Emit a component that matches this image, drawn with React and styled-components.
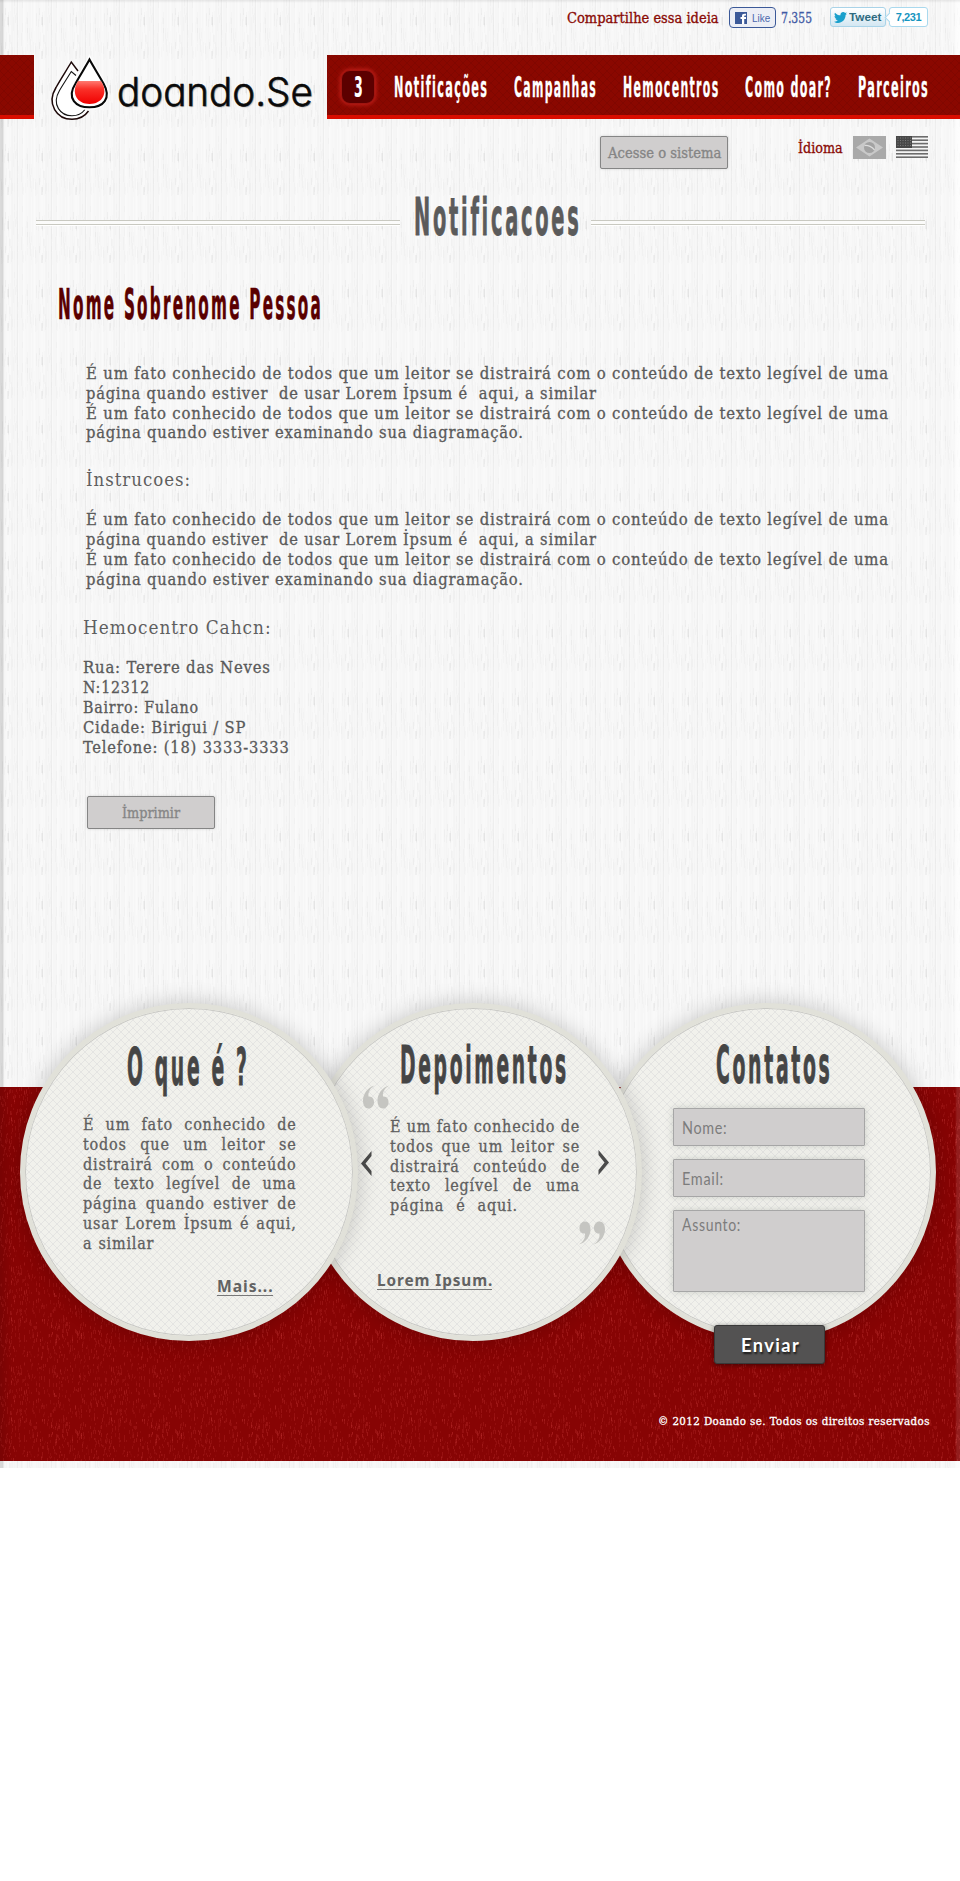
import React, { useLayoutEffect, useRef } from "react";
import styled, { createGlobalStyle } from "styled-components";

const svgUrl = (w, h, body) =>
  `url("data:image/svg+xml,${encodeURIComponent(
    `<svg xmlns="http://www.w3.org/2000/svg" width="${w}" height="${h}">${body}</svg>`
  )}")`;

// Small seeded generator so that the textures are the same on every load.
const seeded = (seed) => () => {
  seed = (seed * 16807) % 2147483647;
  return seed / 2147483647;
};

const paperTile = (() => {
  const rnd = seeded(71);
  let s = "";
  for (let x = 0; x < 34; x += 1) {
    s += `<rect x="${x}" width="1" height="68" fill="#000" opacity="${(rnd() * 0.022).toFixed(3)}"/>`;
  }
  for (let i = 0; i < 60; i++) {
    const o = (0.005 + rnd() * 0.015).toFixed(3);
    s += `<rect x="${Math.floor(rnd() * 34)}" y="${Math.floor(rnd() * 52)}" width="1" height="${6 + Math.floor(rnd() * 10)}" fill="#000" opacity="${o}"/>`;
  }
  [17, 51].forEach((y) => {
    s += `<rect x="7" y="${y}" width="2" height="8" fill="#000" opacity=".04"/>`;
    s += `<rect x="5" y="${y - 9}" width="1" height="7" fill="#000" opacity=".03"/>`;
  });
  s += `<rect x="17" width="1" height="68" fill="#000" opacity=".035"/>`;
  return svgUrl(34, 68, s);
})();

const leatherTile = (() => {
  const rnd = seeded(913);
  let s = "";
  for (let i = 0; i < 700; i++) {
    const x = Math.floor(rnd() * 100);
    const y = Math.floor(rnd() * 98);
    const o = (0.04 + rnd() * 0.12).toFixed(3);
    s += `<rect x="${x}" y="${y}" width="1" height="${2 + Math.floor(rnd() * 3)}" fill="#f66" opacity="${o}"/>`;
  }
  return svgUrl(100, 100, s);
})();

const hatchTile = (color, opacity) =>
  svgUrl(8, 8, `<path d="M0 0L8 8M8 0L0 8" stroke="${color}" stroke-opacity="${opacity}" stroke-width=".7"/>`);

const GlobalStyle = createGlobalStyle`
  * { box-sizing: border-box; }
  body { margin: 0; background: #fff; }
`;

const serif = `"DejaVu Serif Condensed", "DejaVu Serif", serif`;
const tall = `"DejaVu Sans Condensed", "DejaVu Sans", sans-serif`;

const FitBox = styled.span`
  display: block;
  flex: none;
  width: ${(p) => p.$w}px;
  white-space: pre;
`;
const FitInner = styled.span`
  display: inline-block;
  transform-origin: 0 50%;
`;

// Squeezes or stretches one line of text to the given width.
function Fit({ w, children }) {
  const ref = useRef(null);
  useLayoutEffect(() => {
    const el = ref.current;
    const spacing = parseFloat(getComputedStyle(el).letterSpacing) || 0;
    el.style.transform = `scaleX(${w / (el.offsetWidth - spacing)})`;
  }, [w, children]);
  return (
    <FitBox $w={w}>
      <FitInner ref={ref}>{children}</FitInner>
    </FitBox>
  );
}

const Page = styled.div`
  width: 960px;
  height: 1468px;
  overflow: hidden;
  background:
    linear-gradient(rgba(0, 0, 0, 0.08), transparent 3px),
    linear-gradient(90deg, rgba(0, 0, 0, 0.13) 3px, transparent 4px, transparent 954px, rgba(255, 255, 255, 0.7) 956px),
    ${paperTile} #fafafa;
`;

const ShareBar = styled.div`
  height: 55px;
  padding: 7px 31px 0 567px;
  display: flex;
  align-items: flex-start;
`;
const ShareLabel = styled.div`
  font: 14.5px/20px ${serif};
  color: #8a0a05;
  -webkit-text-stroke: 0.3px #8a0a05;
  padding-top: 1px;
  margin-right: 10px;
`;
const LikeButton = styled.div`
  width: 47px;
  height: 21px;
  border: 1px solid #3b5998;
  border-radius: 4px;
  background: #eceef5;
  display: flex;
  align-items: center;
  gap: 5px;
  padding-left: 5px;
  font: 11px "Liberation Sans", sans-serif;
  color: #4a66ac;
`;
const LikeCount = styled.div`
  font: 14px/23px ${serif};
  color: #3f59a5;
  -webkit-text-stroke: 0.3px #3f59a5;
  margin: 0 18px 0 5px;
`;
const TweetButton = styled.div`
  width: 56px;
  height: 20px;
  border: 1px solid #a9d3e8;
  border-radius: 3px;
  background: linear-gradient(#fff, #d3e7f2);
  display: flex;
  align-items: center;
  gap: 2px;
  padding-left: 3px;
  font: bold 11px "Liberation Sans", sans-serif;
  color: #2d6a80;
`;
const TweetCount = styled.div`
  position: relative;
  width: 39px;
  height: 20px;
  margin-left: 3px;
  border: 1px solid #a9d9ee;
  border-radius: 3px;
  background: #fff;
  font: bold 11px/18px "Liberation Sans", sans-serif;
  letter-spacing: -0.4px;
  text-align: center;
  color: #1595bf;
  &::before {
    content: "";
    position: absolute;
    left: -4px;
    top: 6px;
    width: 6px;
    height: 6px;
    background: #fff;
    border: solid #a9d9ee;
    border-width: 0 0 1px 1px;
    transform: rotate(45deg);
  }
`;

const Header = styled.header`
  display: flex;
  height: 64px;
`;
const RedStripe = styled.div`
  width: 34px;
  background: ${hatchTile("#500", 0.25)} #8a0800;
  border-bottom: 4px solid #d90d00;
`;
const LogoArea = styled.div`
  width: 293px;
  display: flex;
  padding-left: 15px;
  svg { overflow: visible; flex: none; }
`;
const Wordmark = styled.div`
  margin-left: 9px;
  font: 300 39px/60px Inter, sans-serif;
  font-feature-settings: "cv11" 1;
  padding-top: 7px;
  color: #0a0a0a;
  -webkit-text-stroke: 0.6px #0a0a0a;
  text-shadow: 1px 1px 1px rgba(0, 0, 0, 0.3);
`;
const Nav = styled.nav`
  flex: 1;
  display: flex;
  padding-left: 14px;
  background: ${hatchTile("#500", 0.25)} #8a0800;
  border-bottom: 4px solid #d90d00;
`;
const Badge = styled.div`
  width: 34px;
  height: 34px;
  margin: 15px 19px 0 0;
  border-radius: 9px;
  background: #5c0000;
  border: 1px solid #a01510;
  box-shadow: 0 0 4px 1px #c4201a;
  display: flex;
  justify-content: center;
  font: bold 28px/34px ${tall};
  color: #fff;
`;
const NavItem = styled.a`
  margin-right: ${(p) => p.$gap}px;
  padding-top: 3px;
  font: bold 28px/60px ${tall};
  letter-spacing: 3px;
  color: #fff;
  -webkit-text-stroke: 0.3px #fff;
`;

const Tools = styled.div`
  display: flex;
  padding: 17px 0 0 600px;
  height: 50px;
`;
const GreyButton = styled.div`
  width: 128px;
  height: 33px;
  border: 1px solid #858585;
  border-radius: 2px;
  background: #d0cece;
  box-shadow: 0 0 3px rgba(0, 0, 0, 0.15);
  display: flex;
  justify-content: center;
  font: 14.5px/32px ${serif};
  color: #858585;
  -webkit-text-stroke: 0.3px #858585;
`;
const Language = styled.div`
  margin: 2px 10px 0 70px;
  font: 14.5px/20px ${serif};
  color: #8a0a05;
  -webkit-text-stroke: 0.3px #8a0a05;
`;
const FlagSlot = styled.div`
  margin-right: 10px;
  height: 23px;
  svg { display: block; }
`;

const TitleRow = styled.div`
  display: flex;
  margin: 19px 35px 0 36px;
  height: 60px;
`;
const Rule = styled.div`
  width: ${(p) => p.$w}px;
  height: 5px;
  margin-top: 32px;
  border: 1px solid #c9c9c1;
  border-width: 1px 0;
  background: #fbfbfa;
  box-shadow: 0 1px 0 #fff;
`;
const Title = styled.h1`
  margin: 0 12px 0 14px;
  font: bold 51px/60px ${tall};
  letter-spacing: 6.5px;
  color: #5b5b5b;
  -webkit-text-stroke: 0.8px #5b5b5b;
`;
const PersonName = styled.h2`
  margin: 32px 0 0 58px;
  font: bold 42px/50px ${tall};
  letter-spacing: 5.5px;
  color: #5a0000;
  -webkit-text-stroke: 0.6px #5a0000;
`;
const Copy = styled.div`
  margin: ${(p) => p.$top}px 0 0 ${(p) => p.$left}px;
  font: 16.3px/${(p) => p.$lh || 19.75}px ${serif};
  letter-spacing: 0.8px;
  color: #5a5a5a;
  -webkit-text-stroke: 0.3px #5a5a5a;
`;
const Subtitle = styled.h3`
  margin: ${(p) => p.$top}px 0 0 ${(p) => p.$left}px;
  font: 400 19px/24px ${serif};
  letter-spacing: 1px;
  color: #5f5f5f;
`;
const PrintRow = styled.div`
  margin: 38px 0 258px 87px;
`;

const Footer = styled.footer`
  height: 374px;
  background:
    linear-gradient(90deg, rgba(0, 0, 0, 0.1), transparent 12px, transparent 955px, rgba(255, 255, 255, 0.1) 957px),
    ${leatherTile} #870404;
`;
const CircleRow = styled.div`
  display: flex;
  padding-left: 20px;
  position: relative;
  top: -84px;
  height: 338px;
`;
const Circle = styled.section`
  position: relative;
  z-index: ${(p) => p.$z};
  flex: none;
  width: 338px;
  height: 338px;
  margin-left: ${(p) => p.$shift || 0}px;
  padding: ${(p) => p.$pad};
  border: 5px solid #e1e1d9;
  border-radius: 50%;
  background: ${hatchTile("#778", 0.15)} #f1f1ec;
  box-shadow: inset 0 0 0 1px #c9c9c5, 0 0 22px rgba(0, 0, 0, 0.2);
`;
const CircleTitle = styled.h2`
  margin: 0 0 0 ${(p) => p.$left}px;
  font: bold 51px/60px ${tall};
  letter-spacing: 6.5px;
  color: #454545;
  -webkit-text-stroke: 0.8px #454545;
`;
const Justified = styled.div`
  width: ${(p) => p.$w}px;
  margin: ${(p) => p.$margin};
  font: 16px/19.8px ${serif};
  letter-spacing: 0.8px;
  color: #5f5f5f;
  -webkit-text-stroke: 0.3px #5f5f5f;
`;
const JustLine = styled.div`
  display: flex;
  justify-content: ${(p) => (p.$last ? "flex-start" : "space-between")};
  gap: ${(p) => p.$last || 0}px;
`;
const TextLink = styled.a`
  display: block;
  width: max-content;
  margin: ${(p) => p.$margin};
  border-bottom: 1px solid #777;
  font: bold 16.5px/19px "Noto Sans", sans-serif;
  letter-spacing: 1px;
  color: #626262;
`;
const Overlay = styled.span`
  position: absolute;
  left: ${(p) => p.$x}px;
  top: ${(p) => p.$y}px;
  line-height: 0;
`;
const Fields = styled.div`
  display: flex;
  flex-direction: column;
  gap: 13px;
  margin: 12px 0 0 70px;
`;
const Field = styled.div`
  width: 192px;
  height: ${(p) => (p.$tall ? 82 : 38)}px;
  padding: ${(p) => (p.$tall ? 3 : 8)}px 0 0 8px;
  border: 1px solid #a6a6a6;
  border-radius: 1px;
  background: #d0cece;
  box-shadow: 0 0 7px rgba(90, 100, 90, 0.25);
  font: 17px/22px Lato, sans-serif;
  letter-spacing: 0.8px;
  color: #7c7c7c;
`;
const Submit = styled.div`
  width: 111px;
  height: 39px;
  margin: 33px 0 0 111px;
  border: 1px solid #393939;
  border-radius: 3px;
  background: #535252;
  box-shadow: 0 1px 5px rgba(0, 0, 0, 0.5);
  display: flex;
  justify-content: center;
  font: bold 19px/38px Lato, sans-serif;
  letter-spacing: 1.5px;
  color: #fff;
  text-shadow: 1px 2px 2px rgba(0, 0, 0, 0.7);
`;
const Copyright = styled.div`
  display: flex;
  justify-content: flex-end;
  padding-right: 31px;
  margin-top: -13px;
  font: 11px/20px ${serif};
  letter-spacing: 0.4px;
  color: #fff;
  -webkit-text-stroke: 0.3px #fff;
`;

const Drops = () => (
  <svg width="59" height="64" viewBox="0 0 59 64">
    <defs>
      <linearGradient id="blood" x1="0" y1="0" x2="0" y2="1">
        <stop offset="0" stopColor="#ff7a70" />
        <stop offset=".35" stopColor="#fa3028" />
        <stop offset="1" stopColor="#f00000" />
      </linearGradient>
    </defs>
    <path d="M29 16L22.3 7C18 14.500 12 23.500 7 32.500C-3 49 8 64.300 23 64.300C30 64.300 36 61 39.500 56" fill="#fff" stroke="#1d0909" strokeWidth="1.500" />
    <path d="M27 20.500L22.300 16.500C18 23.500 14 29.500 10.500 35.500C2 50 12 60.800 23 60.800C29 60.800 33 58.500 36 54.500" fill="none" stroke="#151515" strokeWidth="1.100" />
    <path d="M40.500 3.500C37 11 31 20 26.500 28C17 43 27 53 40.500 53C54 53 63 43 54.500 28C50 20 44 11 40.500 3.500Z" fill="#fff" stroke="#fff" strokeWidth="4" />
    <path d="M40.500 4.500C37 11 31 20.500 26.500 28.500C17 43.500 27 52.300 40.500 52.300C54 52.300 63 43.500 54.500 28.500C50 20.500 44 11 40.500 4.500Z" fill="#fff" stroke="#080808" strokeWidth="2.100" />
    <path d="M29 26H52C60 38 53 49 40.500 49C28 49 21.500 38 29 26Z" fill="url(#blood)" />
  </svg>
);

const FacebookMark = () => (
  <svg width="12" height="12" viewBox="0 0 12 12">
    <rect width="12" height="12" fill="#3b5998" />
    <path d="M7 12V7H5.500V5H7V4C7 2.200 8 1.500 11 1.800V3.600C9.500 3.500 9.200 3.600 9.200 5H11V7H9.200V12Z" fill="#fff" />
  </svg>
);

const Bird = () => (
  <svg width="13" height="11" viewBox="0 0 24 20">
    <path d="M24 3.500L21.500 5C21.500 14 15 20 7.500 20C4.500 20 2 19 0 17.700C3 18 5.500 17 7 15.600C5 15.500 3.200 14 2.700 12H5C2.500 11.500 1 9.500 1 7L3.200 7.500C1 6 .500 3.200 1.800 1C4.500 4 8 6 12 6C11.300 2.500 14 0 17 0C18.500 0 19.800.600 20.500 1.500L23.500.500L22 3Z" fill="#19a0cc" />
  </svg>
);

const BrazilFlag = () => (
  <svg width="33" height="23" viewBox="0 0 33 23">
    <rect width="33" height="23" fill="#a9a9a9" />
    <path d="M3 11.500L16.500 2.500L30 11.500L16.500 20.500Z" fill="#c9c9c9" />
    <circle cx="16.500" cy="11.500" r="5.500" fill="#a2a2a2" />
    <path d="M11.500 9.500C15 9 19.500 11 21.500 14" stroke="#ddd" strokeWidth="1.300" fill="none" />
  </svg>
);

const UsFlag = () => (
  <svg width="32" height="22" viewBox="0 0 32 22">
    <rect width="32" height="22" fill="#f4f4f4" />
    {[0, 3.4, 6.8, 10.2, 13.6, 17, 20.4].map((y) => (
      <rect key={y} y={y} width="32" height="1.600" fill="#6c6c6c" />
    ))}
    <rect width="16" height="12" fill="#484848" />
    {[2, 4.5, 7, 9.5].map((y) => (
      <path key={y} d={`M1.500 ${y}H15`} stroke="#7a7a7a" strokeWidth="1" strokeDasharray="1 1.500" />
    ))}
  </svg>
);

const QuoteMark = ({ flip }) => (
  <svg width="27" height="24" viewBox="0 0 27 24">
    <g fill="#c5c5c1" transform={flip ? "rotate(180 13.5 12)" : undefined}>
      {[0, 14.5].map((x) => (
        <path key={x} transform={`translate(${x} 0)`} d="M11.500.500C7 3.500 5 7 5.500 11.500C9 11 11.500 14 11 18C10.500 21.500 8 23.500 5.500 23.500C2 23.500 0 20 0 15.500C0 9 4.500 2.500 11.500.500Z" />
      ))}
    </g>
  </svg>
);

const Chevron = ({ right }) => (
  <svg width="11" height="25" viewBox="0 0 11 25">
    <path transform={right ? "rotate(180 5.5 12.5)" : undefined} d="M10.500 0V5L4.500 12.500L10.500 20V25L0 12.500Z" fill="#4b4b4b" />
  </svg>
);

const Lines = ({ rows }) => rows.map(([w, t], i) => <Fit key={i} w={w}>{t}</Fit>);

const JustifiedText = ({ rows, lastGap }) =>
  rows.map((t, i) => (
    <JustLine key={i} $last={i === rows.length - 1 ? lastGap : 0}>
      {t.split(" ").map((word, j) => (
        <span key={j}>{word}{" "}</span>
      ))}
    </JustLine>
  ));

const lorem = [
  [802, "É um fato conhecido de todos que um leitor se distrairá com o conteúdo de texto legível de uma"],
  [510, "página quando estiver  de usar Lorem İpsum é  aqui, a similar"],
  [802, "É um fato conhecido de todos que um leitor se distrairá com o conteúdo de texto legível de uma"],
  [437, "página quando estiver examinando sua diagramação."],
];

const navItems = [
  ["Notificações", 93, 27],
  ["Campanhas", 82, 27],
  ["Hemocentros", 95, 27],
  ["Como doar?", 86, 27],
  ["Parceiros", 70, 0],
];

export default function App() {
  return (
    <>
      <GlobalStyle />
      <Page>
        <ShareBar>
          <ShareLabel><Fit w={152}>Compartilhe essa ideia</Fit></ShareLabel>
          <LikeButton><FacebookMark /><Fit w={18}>Like</Fit></LikeButton>
          <LikeCount><Fit w={31}>7.355</Fit></LikeCount>
          <TweetButton><Bird /><Fit w={32}>Tweet</Fit></TweetButton>
          <TweetCount>7,231</TweetCount>
        </ShareBar>

        <Header>
          <RedStripe />
          <LogoArea>
            <Drops />
            <Wordmark><Fit w={196}>doando.Se</Fit></Wordmark>
          </LogoArea>
          <Nav>
            <Badge><Fit w={9}>3</Fit></Badge>
            {navItems.map(([label, w, gap]) => (
              <NavItem key={label} $gap={gap}><Fit w={w}>{label}</Fit></NavItem>
            ))}
          </Nav>
        </Header>

        <Tools>
          <GreyButton><Fit w={113}>Acesse o sistema</Fit></GreyButton>
          <Language><Fit w={45}>İdioma</Fit></Language>
          <FlagSlot><BrazilFlag /></FlagSlot>
          <FlagSlot><UsFlag /></FlagSlot>
        </Tools>

        <TitleRow>
          <Rule $w={364} />
          <Title><Fit w={165}>Notificacoes</Fit></Title>
          <Rule $w={334} />
        </TitleRow>
        <PersonName><Fit w={263}>Nome Sobrenome Pessoa</Fit></PersonName>

        <Copy $top={34} $left={86}><Lines rows={lorem} /></Copy>
        <Subtitle $top={24} $left={86}><Fit w={104}>İnstrucoes:</Fit></Subtitle>
        <Copy $top={19} $left={86} $lh={20}><Lines rows={lorem} /></Copy>
        <Subtitle $top={25} $left={83}><Fit w={188}>Hemocentro Cahcn:</Fit></Subtitle>
        <Copy $top={19} $left={83} $lh={20}>
          <Lines
            rows={[
              [187, "Rua: Terere das Neves"],
              [66, "N:12312"],
              [115, "Bairro: Fulano"],
              [162, "Cidade: Birigui / SP"],
              [206, "Telefone: (18) 3333-3333"],
            ]}
          />
        </Copy>
        <PrintRow>
          <GreyButton><Fit w={58}>İmprimir</Fit></GreyButton>
        </PrintRow>

        <Footer>
          <CircleRow>
            <Circle $z={3} $pad="30px 0 0 58px">
              <CircleTitle $left={44}><Fit w={120}>O que é ?</Fit></CircleTitle>
              <Justified $w={213.5} $margin="17px 0 0 0">
                <JustifiedText
                  lastGap={6}
                  rows={[
                    "É um fato conhecido de",
                    "todos que um leitor se",
                    "distrairá com o conteúdo",
                    "de texto legível de uma",
                    "página quando estiver de",
                    "usar Lorem İpsum é aqui,",
                    "a similar",
                  ]}
                />
              </Justified>
              <TextLink $margin="22px 0 0 134px"><Fit w={56}>Mais...</Fit></TextLink>
            </Circle>

            <Circle $z={2} $shift={-54} $pad="28px 0 0 81px">
              <Overlay $x={54} $y={77}><QuoteMark /></Overlay>
              <Overlay $x={52} $y={143}><Chevron /></Overlay>
              <Overlay $x={289} $y={142}><Chevron right /></Overlay>
              <Overlay $x={269} $y={213}><QuoteMark flip /></Overlay>
              <CircleTitle $left={10}><Fit w={166}>Depoimentos</Fit></CircleTitle>
              <Justified $w={190} $margin="21px 0 0 0">
                <JustifiedText
                  lastGap={12}
                  rows={[
                    "É um fato conhecido de",
                    "todos que um leitor se",
                    "distrairá conteúdo de",
                    "texto legível de uma",
                    "página é aqui.",
                  ]}
                />
              </Justified>
              <TextLink $margin="54px 0 0 -13px"><Fit w={115}>Lorem Ipsum.</Fit></TextLink>
            </Circle>

            <Circle $z={1} $shift={-44} $pad="28px 0 0 0">
              <CircleTitle $left={113}><Fit w={114}>Contatos</Fit></CircleTitle>
              <Fields>
                <Field><Fit w={45}>Nome:</Fit></Field>
                <Field><Fit w={41}>Email:</Fit></Field>
                <Field $tall><Fit w={58}>Assunto:</Fit></Field>
              </Fields>
              <Submit><Fit w={58}>Enviar</Fit></Submit>
            </Circle>
          </CircleRow>
          <Copyright><Fit w={271}>© 2012 Doando se. Todos os direitos reservados</Fit></Copyright>
        </Footer>
      </Page>
    </>
  );
}
